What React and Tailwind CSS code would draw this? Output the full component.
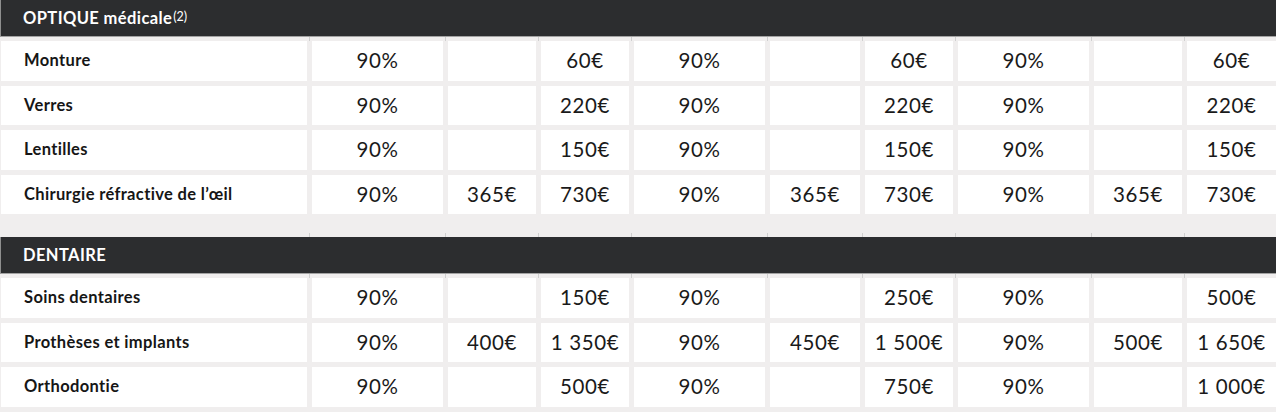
import React from "react";

const GRID =
  "grid grid-cols-[306px_131px_88px_88px_131px_90px_88px_131px_88px_89px] gap-x-[5px]";

const optique = [
  ["Monture", "90%", "", "60€", "90%", "", "60€", "90%", "", "60€"],
  ["Verres", "90%", "", "220€", "90%", "", "220€", "90%", "", "220€"],
  ["Lentilles", "90%", "", "150€", "90%", "", "150€", "90%", "", "150€"],
  ["Chirurgie réfractive de l’œil", "90%", "365€", "730€", "90%", "365€", "730€", "90%", "365€", "730€"],
];

const dentaire = [
  ["Soins dentaires", "90%", "", "150€", "90%", "", "250€", "90%", "", "500€"],
  ["Prothèses et implants", "90%", "400€", "1 350€", "90%", "450€", "1 500€", "90%", "500€", "1 650€"],
  ["Orthodontie", "90%", "", "500€", "90%", "", "750€", "90%", "", "1 000€"],
];

function Ticks() {
  return (
    <div className={GRID + " h-[4px]"}>
      {Array.from({ length: 10 }).map((_, i) => (
        <div
          key={i}
          className={i < 9 ? "h-[4px] border-r border-[#cfcfcf] -mr-[3px]" : "h-[4px]"}
        />
      ))}
    </div>
  );
}

function Header({ children }) {
  return (
    <div className="h-[37px] bg-[#2c2d2f] border-b border-[#a3a3a3] border-l border-l-[#8f8f8f] flex items-center pl-[22px] text-white font-bold text-[16.5px] tracking-[0.4px] leading-none">
      {children}
    </div>
  );
}

function Row({ cells }) {
  return (
    <div className={GRID + " h-[39.5px]"}>
      {cells.map((c, i) =>
        i === 0 ? (
          <div
            key={i}
            className="bg-white flex items-center pl-[23px] font-bold text-[16.5px] tracking-[0.35px] text-[#161616]"
          >
            {c}
          </div>
        ) : (
          <div
            key={i}
            className="bg-white flex items-center justify-center text-[20.5px] text-[#1a1a1a] tracking-[0.6px]"
          >
            {c}
          </div>
        )
      )}
    </div>
  );
}

export default function App() {
  return (
    <div
      className="w-[1276px] h-[412px] bg-[#f0eeee] pl-[1px] overflow-hidden"
      style={{ fontFamily: "Lato, 'Noto Sans', sans-serif" }}
    >
      <div className="-ml-[1px]">
        <Header>
          <span>
            OPTIQUE médicale
            <sup className="font-normal text-[12.5px] tracking-normal ml-[1px] relative -top-[3px]">(2)</sup>
          </span>
        </Header>
      </div>
      <Ticks />
      <div className="flex flex-col gap-y-[5px]">
        {optique.map((r, i) => (
          <Row key={i} cells={r} />
        ))}
      </div>
      <div className="h-[19px]" />
      <Ticks />
      <div className="-ml-[1px]">
        <Header>DENTAIRE</Header>
      </div>
      <Ticks />
      <div className="flex flex-col gap-y-[5px]">
        {dentaire.map((r, i) => (
          <Row key={i} cells={r} />
        ))}
      </div>
    </div>
  );
}
